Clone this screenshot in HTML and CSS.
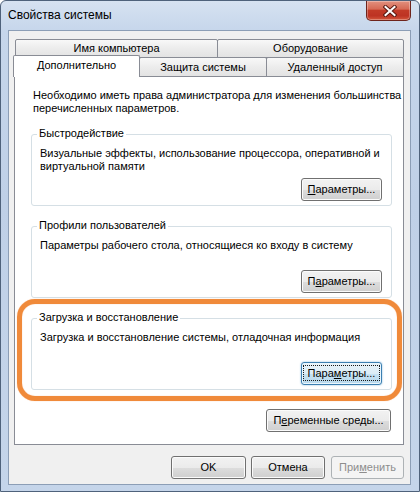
FILE: index.html
```
<!DOCTYPE html>
<html lang="ru">
<head>
<meta charset="utf-8">
<title>Свойства системы</title>
<link rel="stylesheet" href="styles.css">
</head>
<body>
<div class="window">
  <div class="titlebar">
    <span class="title">Свойства системы</span>
    <div class="close">
      <svg width="14" height="12" viewBox="0 0 14 12">
        <path d="M2.5 2 L11.5 10 M11.5 2 L2.5 10" stroke="#5a1a12" stroke-width="4" stroke-linecap="square" fill="none"/>
        <path d="M2.5 2 L11.5 10 M11.5 2 L2.5 10" stroke="#ffffff" stroke-width="2" stroke-linecap="square" fill="none"/>
      </svg>
    </div>
  </div>
  <div class="client">
    <div class="tabrow back">
      <div class="tab t-name">Имя компьютера</div>
      <div class="tab t-hw">Оборудование</div>
    </div>
    <div class="tabrow front">
      <div class="tab sel t-adv">Дополнительно</div>
      <div class="tab t-prot">Защита системы</div>
      <div class="tab t-remote">Удаленный доступ</div>
    </div>
    <div class="panel">
      <p class="intro">Необходимо иметь права администратора для изменения большинства<br>перечисленных параметров.</p>
      <div class="group">
        <div class="group-title">Быстродействие</div>
        <div class="group-desc">Визуальные эффекты, использование процессора, оперативной и<br>виртуальной памяти</div>
        <div class="group-actions"><button class="btn btn-param"><u>П</u>араметры...</button></div>
      </div>
      <div class="group">
        <div class="group-title">Профили пользователей</div>
        <div class="group-desc">Параметры рабочего стола, относящиеся ко входу в систему</div>
        <div class="group-actions"><button class="btn btn-param">П<u>а</u>раметры...</button></div>
      </div>
      <div class="group">
        <div class="group-title">Загрузка и восстановление</div>
        <div class="group-desc">Загрузка и восстановление системы, отладочная информация</div>
        <div class="group-actions"><button class="btn btn-param focus"><span class="label">Пара<u>м</u>етры...</span></button></div>
      </div>
      <div class="env-row"><button class="btn btn-env">П<u>е</u>ременные среды...</button></div>
      <div class="highlight"></div>
    </div>
    <div class="dialog-buttons">
      <button class="btn btn-ok">OK</button>
      <button class="btn btn-cancel">Отмена</button>
      <button class="btn btn-apply disabled">При<u>м</u>енить</button>
    </div>
  </div>
</div>
</body>
</html>
```
FILE: styles.css
```
* { box-sizing: border-box; }
html, body { margin: 0; padding: 0; }
body {
  font-family: "Liberation Sans", Arial, sans-serif;
  font-size: 11px;
  color: #000;
  background: #fff;
}

.window {
  width: 420px;
  height: 492px;
  border: 1px solid #4f627b;
  border-radius: 6px 6px 0 0;
  padding: 0 8px 6px 7px;
  background: linear-gradient(180deg, #d6e2f1 0px, #c6d6eb 30px, #bfd0e7 200px, #c5d5ea 492px);
  display: flex;
  flex-direction: column;
}

.titlebar {
  height: 29px;
  flex: none;
  display: flex;
  align-items: flex-start;
}
.title {
  margin-top: 7px;
  line-height: 15px;
  font-size: 12px;
  color: #000;
}
.close {
  margin-left: auto;
  width: 45px;
  height: 20px;
  border: 1px solid #6e241c;
  border-top: none;
  border-radius: 0 0 5px 5px;
  background: linear-gradient(180deg, #e2917f 0%, #d66a55 42%, #c23a27 50%, #bd3323 78%, #d4573c 100%);
  box-shadow: inset 0 0 0 1px rgba(255, 255, 255, 0.3);
  display: flex;
  align-items: center;
  justify-content: center;
  padding-left: 2px;
}
.close svg { display: block; }

.client {
  height: 455px;
  flex: none;
  border: 1px solid #8c9eb6;
  background: #f0f0f0;
  padding: 8px 6px 5px 5px;
  display: flex;
  flex-direction: column;
}

.tabrow { display: flex; flex: none; }
.back { margin-left: 1px; height: 19px; }
.front { margin-top: -3px; height: 22px; }

.tab {
  border: 1px solid #898c95;
  border-radius: 2px 2px 0 0;
  background: linear-gradient(180deg, #f8f8f8 0%, #ececec 50%, #e3e3e3 100%);
  text-align: center;
  white-space: nowrap;
  color: #000;
}
.back .tab { height: 19px; line-height: 17px; }
.t-name { width: 203px; }
.t-hw { width: 187px; margin-left: -1px; }

.front .tab { margin-top: 2px; height: 20px; line-height: 18px; margin-left: -1px; }
.front .tab.sel {
  margin-top: 0;
  height: 22px;
  line-height: 19px;
  width: 127px;
  background: #fff;
  border-bottom: none;
  position: relative;
  z-index: 1;
}
.t-prot { width: 128px; }
.t-remote { width: 138px; }

.panel {
  width: 390px;
  height: 369px;
  flex: none;
  margin-top: -1px;
  border: 1px solid #898c95;
  background: #fff;
  padding: 12px 11px 12px 16px;
  position: relative;
}

.intro {
  margin: 0 0 0 2px;
  line-height: 13px;
  white-space: nowrap;
}

.group {
  border: 1px solid #d5dfe5;
  border-radius: 3px;
  padding: 0 9px 4px 8px;
}
.intro + .group { margin-top: 19px; }
.group + .group { margin-top: 20px; }

.group-title {
  width: fit-content;
  margin: -8px 0 0 -3px;
  padding: 0 2px;
  background: #fff;
  line-height: 13px;
  white-space: nowrap;
}
.group-desc {
  margin-top: 7px;
  min-height: 26px;
  line-height: 13px;
  white-space: nowrap;
}
.group-actions {
  display: flex;
  justify-content: flex-end;
  margin-top: 5px;
}

.btn {
  height: 23px;
  font: inherit;
  color: #000;
  border: 1px solid #707070;
  border-radius: 3px;
  background: linear-gradient(180deg, #f2f2f2 0%, #ebebeb 50%, #dddddd 51%, #cfcfcf 100%);
  box-shadow: inset 0 0 0 1px #fbfbfb;
  padding: 0;
  line-height: 19px;
  white-space: nowrap;
}
.btn u { text-decoration: underline; text-underline-offset: 1px; }
.btn-param { width: 81px; }
.btn.focus {
  border-color: #3c7fb1;
  background: linear-gradient(180deg, #e8f3f9 0%, #dbecf6 50%, #c7e2f2 51%, #b7d8ed 100%);
  box-shadow: inset 0 0 0 1px #e9f6fd, 0 0 2px #7fb4d8;
}
.btn.focus .label {
  outline: 1px dotted #1a1a1a;
  outline-offset: 1px;
  padding: 0 3px;
}

.env-row {
  display: flex;
  justify-content: flex-end;
  margin-top: 19px;
  padding-right: 1px;
}
.btn-env { width: 125px; }

.dialog-buttons {
  display: flex;
  justify-content: flex-end;
  margin-top: 11px;
  flex: none;
}
.btn-ok { width: 75px; }
.btn-cancel { width: 74px; margin-left: 5px; }
.btn-apply { width: 73px; margin-left: 6px; }
.btn.disabled {
  color: #8d8d8d;
  border-color: #adb2b5;
  background: #f4f4f4;
  box-shadow: none;
}

.highlight {
  position: absolute;
  left: 2px;
  top: 222px;
  width: 385px;
  height: 102px;
  border: 5px solid #f08a3a;
  border-radius: 18px;
  box-shadow: 0 0 1px #f6b080, inset 0 0 1px #f6b080;
  pointer-events: none;
}
```
